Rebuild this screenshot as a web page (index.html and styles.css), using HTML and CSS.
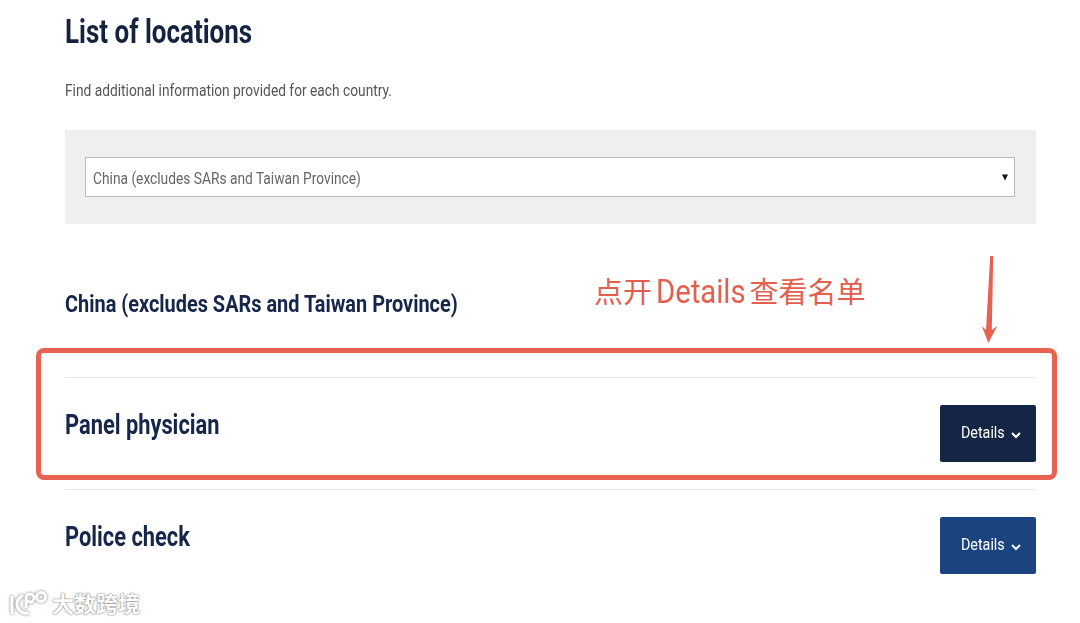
FILE: index.html
```html
<!DOCTYPE html>
<html lang="en">
<head>
  <meta charset="UTF-8">
  <title>List of locations</title>
  <link rel="stylesheet" href="styles.css">
</head>
<body>

  <main class="page">
    <h1 class="title"><span class="squeeze">List of locations</span></h1>
    <p class="intro"><span class="squeeze">Find additional information provided for each country.</span></p>

    <!-- Country picker -->
    <div class="picker">
      <div class="select">
        <span class="squeeze">China (excludes SARs and Taiwan Province)</span>
        <svg class="select-arrow" width="6" height="7" viewBox="0 0 6 7"><path d="M0 0.5h6L3 6.5z"/></svg>
      </div>
    </div>

    <h2 class="country"><span class="squeeze">China (excludes SARs and Taiwan Province)</span></h2>

    <!-- Result rows -->
    <section class="row">
      <h3 class="row-title"><span class="squeeze">Panel physician</span></h3>
      <button class="details details-active">
        <span class="squeeze">Details</span>
        <svg class="chevron" width="10" height="7" viewBox="0 0 10 7"><path d="M1 1l4 4 4-4"/></svg>
      </button>
    </section>
    <section class="row">
      <h3 class="row-title"><span class="squeeze">Police check</span></h3>
      <button class="details">
        <span class="squeeze">Details</span>
        <svg class="chevron" width="10" height="7" viewBox="0 0 10 7"><path d="M1 1l4 4 4-4"/></svg>
      </button>
    </section>
  </main>

  <!-- Annotation overlay -->
  <div class="note-box"></div>
  <div class="note-text">点开 <span class="note-latin">Details</span> 查看名单</div>
  <svg class="note-arrow" width="18" height="90" viewBox="0 0 18 90">
    <path d="M9.200 1h3L10.800 75l5.500-4L7.300 88 0.700 71l4.300 4z"/>
  </svg>

  <!-- Watermark -->
  <div class="mark">
    <svg class="mark-logo" width="40" height="28" viewBox="0 0 40 28">
      <path d="M3 8v18M14 7C8 11 7 16 9 20c2 4 6 6 11 5"/>
      <path d="M17 20V12"/>
      <circle cx="21" cy="10" r="4"/>
      <circle cx="32" cy="9" r="4.500"/>
    </svg>
    <span class="mark-text">大数跨境</span>
  </div>

</body>
</html>
```

FILE: styles.css
```css
/* RESET & BASE */
* {
  margin: 0;
  padding: 0;
  box-sizing: border-box;
}
body {
  position: relative;
  height: 623px;
  overflow: hidden;
  background: #fff;
  font-family: Roboto, sans-serif;
  color: #15264a;
}

/* the source text is narrower than stock Roboto */
.squeeze {
  display: inline-block;
  transform: scaleX(0.86);
  transform-origin: left center;
  white-space: nowrap;
}

/* PAGE */
.page {
  width: 971px;
  margin-left: 65px;
}
.title {
  padding-top: 12px;
  font-size: 33px;
  line-height: 40px;
  font-weight: 700;
  color: #15233f;
}
.title .squeeze {
  transform: scaleX(0.787);
}
.intro {
  margin-top: 29px;
  font-size: 16px;
  line-height: 20px;
  color: #555;
}

/* PICKER */
.picker {
  margin-top: 29px;
  height: 94px;
  padding: 27px 21px 27px 20px;
  background: #efefef;
}
.select {
  display: flex;
  align-items: center;
  justify-content: space-between;
  height: 40px;
  padding: 2px 6px 0 7px;
  background: #fff;
  border: 1px solid #bbb;
  font-size: 16px;
  color: #666;
}
.select-arrow {
  flex: none;
  fill: #111;
  margin-top: -2px;
}

/* HEADINGS AND ROWS */
.country {
  margin-top: 64px;
  font-size: 24px;
  line-height: 32px;
  font-weight: 700;
  color: #15264a;
}
.country .squeeze {
  transform: scaleX(0.83);
}
.row {
  display: flex;
  align-items: center;
  justify-content: space-between;
  height: 112px;
  border-top: 1px solid #e6e6e6;
}
.country + .row {
  margin-top: 57px;
}
.row-title {
  font-size: 28px;
  line-height: 36px;
  font-weight: 700;
  margin-top: -18px;
}
.row-title .squeeze {
  transform: scaleX(0.78);
}
.details {
  display: flex;
  align-items: center;
  width: 96px;
  height: 57px;
  padding-left: 21px;
  margin-top: -1px;
  border: 0;
  border-radius: 2px;
  background: #1a4380;
  color: #fff;
  font-family: inherit;
  font-size: 17px;
}
.details-active {
  background: #152545;
}
.details .squeeze {
  width: 45px;
  margin-top: -2px;
  transform: scaleX(0.84);
}
.chevron {
  margin-left: 5px;
  margin-top: 4px;
  fill: none;
  stroke: #fff;
  stroke-width: 2;
}

/* ANNOTATIONS */
.note-box {
  position: absolute;
  left: 36px;
  top: 348px;
  width: 1021px;
  height: 132px;
  border: 5px solid #e86252;
  border-radius: 8px;
}
.note-text {
  position: absolute;
  left: 594px;
  top: 272px;
  font-family: Roboto, "Noto Sans CJK SC", sans-serif;
  font-size: 29px;
  line-height: 42px;
  color: #e2604f;
  word-spacing: -3px;
  white-space: nowrap;
}
.note-latin {
  display: inline-block;
  font-size: 34px;
  line-height: 34px;
  transform: scaleX(0.86);
  transform-origin: left center;
  width: 89px;
}
.note-arrow {
  position: absolute;
  left: 981px;
  top: 255px;
  fill: #e86252;
}

/* WATERMARK */
.mark {
  position: absolute;
  left: 9px;
  top: 588px;
  display: flex;
  align-items: center;
  gap: 3px;
}
.mark-logo {
  fill: none;
  stroke: #fff;
  stroke-width: 3;
  filter: drop-shadow(0 0 1.5px #777);
}
.mark-text {
  font-family: "Noto Sans CJK SC", sans-serif;
  font-size: 22px;
  font-weight: 700;
  line-height: 28px;
  color: #fff;
  text-shadow: 0 0 2px #777, 0 0 1px #777;
}
```
